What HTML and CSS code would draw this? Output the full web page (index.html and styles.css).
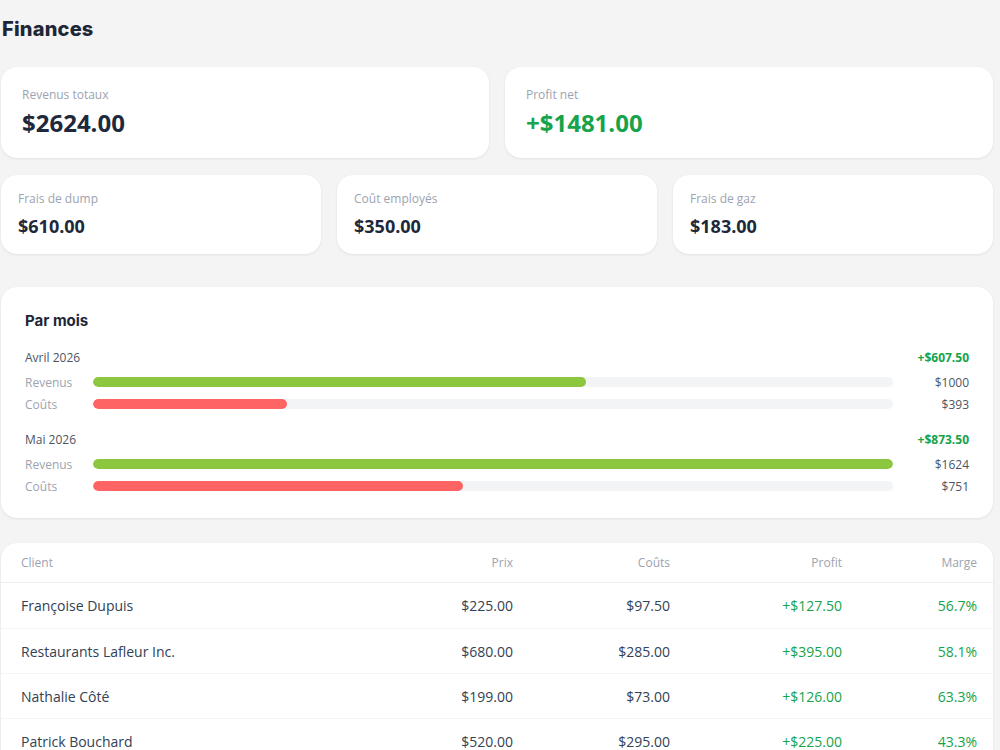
FILE: index.html
```html
<!DOCTYPE html>
<html lang="fr">
<head>
  <meta charset="UTF-8">
  <link rel="stylesheet" href="styles.css">
  <title>Finances</title>
</head>
<body>
  <div class="page">
    <h1 class="title">Finances</h1>

    <div class="cards cards-2">
      <div class="card stat big">
        <div class="stat-label">Revenus totaux</div>
        <div class="stat-value">$2624.00</div>
      </div>
      <div class="card stat big">
        <div class="stat-label">Profit net</div>
        <div class="stat-value green">+$1481.00</div>
      </div>
    </div>

    <div class="cards cards-3">
      <div class="card stat">
        <div class="stat-label">Frais de dump</div>
        <div class="stat-value">$610.00</div>
      </div>
      <div class="card stat">
        <div class="stat-label">Coût employés</div>
        <div class="stat-value">$350.00</div>
      </div>
      <div class="card stat">
        <div class="stat-label">Frais de gaz</div>
        <div class="stat-value">$183.00</div>
      </div>
    </div>

    <div class="card months">
      <h2 class="section-title">Par mois</h2>

      <div class="month">
        <div class="month-head">
          <span>Avril 2026</span>
          <span class="green bold">+$607.50</span>
        </div>
        <div class="bar-row">
          <span class="bar-label">Revenus</span>
          <div class="track"><div class="fill rev" style="width: 61.58%"></div></div>
          <span class="bar-value">$1000</span>
        </div>
        <div class="bar-row">
          <span class="bar-label">Coûts</span>
          <div class="track"><div class="fill cost" style="width: 24.2%"></div></div>
          <span class="bar-value">$393</span>
        </div>
      </div>

      <div class="month">
        <div class="month-head">
          <span>Mai 2026</span>
          <span class="green bold">+$873.50</span>
        </div>
        <div class="bar-row">
          <span class="bar-label">Revenus</span>
          <div class="track"><div class="fill rev" style="width: 100%"></div></div>
          <span class="bar-value">$1624</span>
        </div>
        <div class="bar-row">
          <span class="bar-label">Coûts</span>
          <div class="track"><div class="fill cost" style="width: 46.24%"></div></div>
          <span class="bar-value">$751</span>
        </div>
      </div>
    </div>

    <div class="card table">
      <div class="trow thead">
        <span>Client</span>
        <span class="num">Prix</span>
        <span class="num">Coûts</span>
        <span class="num">Profit</span>
        <span class="num">Marge</span>
      </div>
      <div class="trow">
        <span>Françoise Dupuis</span>
        <span class="num">$225.00</span>
        <span class="num">$97.50</span>
        <span class="num green">+$127.50</span>
        <span class="num green">56.7%</span>
      </div>
      <div class="trow">
        <span>Restaurants Lafleur Inc.</span>
        <span class="num">$680.00</span>
        <span class="num">$285.00</span>
        <span class="num green">+$395.00</span>
        <span class="num green">58.1%</span>
      </div>
      <div class="trow">
        <span>Nathalie Côté</span>
        <span class="num">$199.00</span>
        <span class="num">$73.00</span>
        <span class="num green">+$126.00</span>
        <span class="num green">63.3%</span>
      </div>
      <div class="trow">
        <span>Patrick Bouchard</span>
        <span class="num">$520.00</span>
        <span class="num">$295.00</span>
        <span class="num green">+$225.00</span>
        <span class="num green">43.3%</span>
      </div>
    </div>
  </div>
</body>
</html>
```

FILE: styles.css
```css
body {
  margin: 0;
  background-color: #f4f4f4;
  font-family: 'Open Sans', 'Liberation Sans', sans-serif;
  color: #1f2937;
}

.page {
  width: 992px;
  margin-left: 1px;
  padding-top: 15px;
}

.title {
  margin: 0 0 24px 1px;
  font-family: Inter, 'DejaVu Sans', sans-serif;
  font-size: 20px;
  line-height: 28px;
  font-weight: 800;
  letter-spacing: 0.2px;
  color: #1e2737;
}

.card {
  background-color: #fff;
  border-radius: 16px;
  box-shadow: 0 1px 3px rgba(0, 0, 0, 0.08);
}

.cards {
  display: grid;
  gap: 16px;
  margin-bottom: 17px;
}
.cards-2 {
  grid-template-columns: 1fr 1fr;
}
.cards-3 {
  grid-template-columns: 1fr 1fr 1fr;
  margin-bottom: 33px;
}

.stat {
  padding: 16px 17px 16px;
}
.stat.big {
  padding: 20px 21px 19px;
}
.stat-label {
  font-size: 12px;
  line-height: 16px;
  color: #9ca3af;
}
.stat-value {
  margin-top: 7px;
  font-size: 18px;
  line-height: 24px;
  font-weight: 700;
  color: #1e293b;
}
.stat.big .stat-value {
  margin-top: 4px;
  font-size: 24px;
  line-height: 32px;
}

.green {
  color: #16a34a !important;
}
.bold {
  font-weight: 700;
}

/* Par mois */
.months {
  padding: 24px 24px 21px;
  margin-bottom: 25px;
}
.section-title {
  margin: 0 0 16px;
  font-family: Inter, 'DejaVu Sans', sans-serif;
  font-size: 15px;
  line-height: 20px;
  font-weight: 700;
  color: #1e2737;
}
.month + .month {
  margin-top: 14px;
}
.month-head {
  display: flex;
  justify-content: space-between;
  font-size: 12px;
  line-height: 22px;
  color: #4b5563;
  margin-bottom: 2px;
}
.bar-row {
  display: grid;
  grid-template-columns: 68px 1fr 76px;
  align-items: center;
  height: 22px;
  font-size: 12px;
}
.bar-label {
  color: #9ca3af;
}
.bar-value {
  text-align: right;
  color: #4b5563;
}
.track {
  height: 10px;
  border-radius: 5px;
  background-color: #f3f4f6;
  overflow: hidden;
}
.fill {
  height: 100%;
  border-radius: 5px;
}
.fill.rev {
  background-color: #8dc63f;
}
.fill.cost {
  background-color: #ff6464;
}

/* Table */
.table {
  border-radius: 16px 16px 0 0;
}
.trow {
  box-sizing: border-box;
  display: grid;
  grid-template-columns: 372px 120px 157px 172px 135px;
  align-items: center;
  height: 45px;
  padding: 0 16px 0 20px;
  font-size: 14px;
  color: #334155;
  border-top: 1px solid #f5f5f7;
}
.trow.thead {
  height: 40px;
  border-top: none;
  border-bottom: 1px solid #eeeff2;
  font-size: 12px;
  color: #9ca3af;
}
.thead + .trow {
  border-top: none;
}
.num {
  text-align: right;
}
```
